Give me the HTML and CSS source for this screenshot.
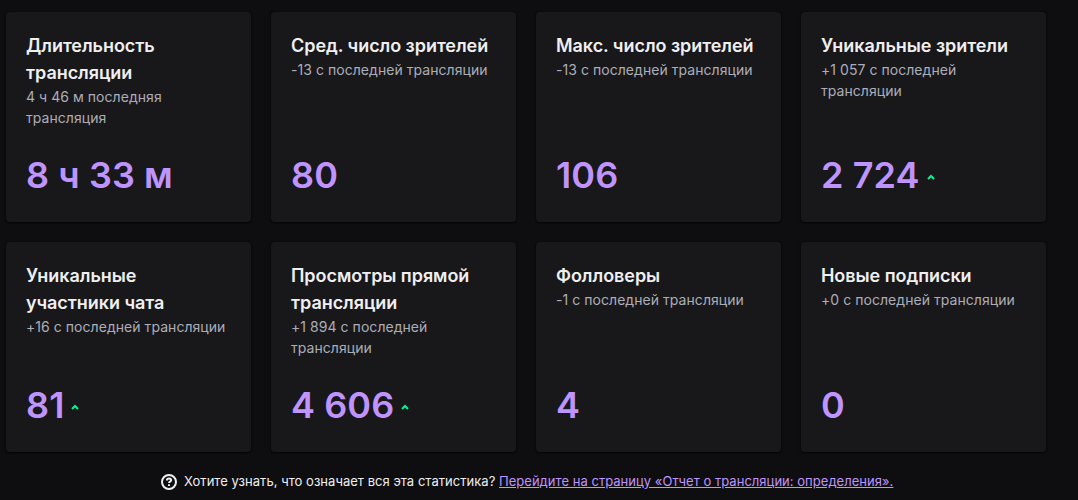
FILE: index.html
```html
<!DOCTYPE html>
<html lang="ru">
<head>
    <meta charset="UTF-8">
    <title>Отчет о трансляции</title>
    <link rel="stylesheet" href="styles.css">
</head>
<body>
    <div class="stats">
        <div class="card">
            <h2>Длительность трансляции</h2>
            <p>4 ч 46 м последняя трансляция</p>
            <div class="value">8 ч 33 м</div>
        </div>
        <div class="card">
            <h2>Сред. число зрителей</h2>
            <p>-13 с последней трансляции</p>
            <div class="value">80</div>
        </div>
        <div class="card">
            <h2>Макс. число зрителей</h2>
            <p>-13 с последней трансляции</p>
            <div class="value">106</div>
        </div>
        <div class="card">
            <h2>Уникальные зрители</h2>
            <p>+1 057 с последней трансляции</p>
            <div class="value">2 724<svg class="up" viewBox="0 0 8 6"><path d="M1 5l3-3 3 3"/></svg></div>
        </div>
        <div class="card">
            <h2>Уникальные участники чата</h2>
            <p>+16 с последней трансляции</p>
            <div class="value">81<svg class="up" viewBox="0 0 8 6"><path d="M1 5l3-3 3 3"/></svg></div>
        </div>
        <div class="card">
            <h2>Просмотры прямой трансляции</h2>
            <p>+1 894 с последней трансляции</p>
            <div class="value">4 606<svg class="up" viewBox="0 0 8 6"><path d="M1 5l3-3 3 3"/></svg></div>
        </div>
        <div class="card">
            <h2>Фолловеры</h2>
            <p>-1 с последней трансляции</p>
            <div class="value">4</div>
        </div>
        <div class="card">
            <h2>Новые подписки</h2>
            <p>+0 с последней трансляции</p>
            <div class="value">0</div>
        </div>
    </div>

    <div class="help">
        <svg class="help-icon" viewBox="0 0 16 16">
            <circle cx="8" cy="8" r="7"/>
            <path d="M5.9 6.6C5.9 5.2 6.8 4.5 8 4.5s2.1.7 2.1 1.8c0 1.4-2.1 1.3-2.1 2.8M8 10.3v1.8"/>
        </svg>
        <span>Хотите узнать, что означает вся эта статистика? <a href="#">Перейдите на страницу «Отчет о трансляции: определения».</a></span>
    </div>
</body>
</html>
```

FILE: styles.css
```css
* {
    margin: 0;
    padding: 0;
    box-sizing: border-box;
}

body {
    font-family: Inter, "Liberation Sans", sans-serif;
    background: #0e0e10;
    color: #efeff1;
    height: 500px;
    overflow: hidden;
    padding: 12px 0 0 6px;
}

.stats {
    display: grid;
    grid-template-columns: repeat(4, 245px);
    grid-auto-rows: 210px;
    gap: 20px;
}

.card {
    display: flex;
    flex-direction: column;
    background: #18181b;
    border-radius: 4px;
    padding: 20px;
    box-shadow: 0 1px 2px rgba(0, 0, 0, 0.6), 0 0 2px rgba(0, 0, 0, 0.5);
}

.card h2 {
    font-size: 18px;
    font-weight: 600;
    line-height: 27px;
    letter-spacing: -0.05px;
}

.card p {
    font-size: 14px;
    line-height: 21px;
    letter-spacing: 0.05px;
    color: #adadb8;
}

.value {
    display: flex;
    align-items: center;
    margin-top: auto;
    font-size: 36px;
    font-weight: 600;
    line-height: 54px;
    letter-spacing: 0.1px;
    color: #bf94ff;
}

.up {
    width: 8px;
    height: 6px;
    margin: 4px 0 0 7px;
    fill: none;
    stroke: #00f593;
    stroke-width: 2;
}

.help {
    display: flex;
    align-items: center;
    gap: 7px;
    margin: 19px 0 0 155px;
    font-size: 13px;
    line-height: 20px;
    letter-spacing: 0.03px;
    white-space: nowrap;
}

.help-icon {
    width: 16px;
    height: 16px;
    margin-top: 1px;
    fill: none;
    stroke: #efeff1;
    stroke-width: 2;
}

.help a {
    color: #bf94ff;
}
```
